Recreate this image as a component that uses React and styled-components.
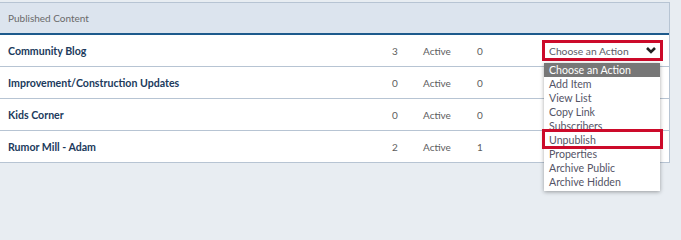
import React from 'react';
import styled, { createGlobalStyle } from 'styled-components';

const GlobalStyle = createGlobalStyle`
  html, body {
    margin: 0;
    padding: 0;
    background: #e8edf2;
    font-family: Lato, "Open Sans", sans-serif;
  }
`;

const Page = styled.div`
  box-sizing: border-box;
  min-height: 204px;
  padding-top: 2px;
  padding-right: 11px;
`;

const Panel = styled.div`
  background: #fff;
  border-top: 1px solid #b7c4d3;
  border-right: 1px solid #b7c4d3;
`;

const Header = styled.div`
  height: 30px;
  display: flex;
  align-items: center;
  padding: 0 8px;
  background: #dce4ee;
  border-bottom: 2px solid #1d5a8c;
  color: #6a6a6a;
  font-size: 10px;
`;

const Row = styled.div`
  position: relative;
  display: grid;
  grid-template-columns: 384px 31px 54px 65px 121px;
  align-items: center;
  height: 31px;
  padding-left: 8px;
  border-bottom: 1px solid #b7c4d3;
  font-size: 10px;
  color: #5d5d5d;
`;

const Title = styled.div`
  color: #203a5c;
  font-size: 10.6px;
  font-weight: 700;
`;

const Cell = styled.div``;

const ActionCell = styled.div`
  position: relative;
`;

const Select = styled.div`
  display: flex;
  align-items: center;
  justify-content: space-between;
  height: 15px;
  padding: 0 4px;
  border: 3px solid #cc0a2a;
  color: #5b5b66;
  font-size: 10.3px;
`;

const Menu = styled.ul`
  position: absolute;
  top: calc(100% + 2px);
  left: 2px;
  width: 116px;
  margin: 0;
  padding: 0 0 2px;
  list-style: none;
  background: #fff;
  box-shadow: 0 1px 4px rgba(0, 0, 0, 0.35);
  z-index: 5;
`;

const Item = styled.li`
  position: relative;
  height: 14px;
  line-height: 14px;
  padding-left: 5px;
  font-size: 10.6px;
  color: ${p => (p.$selected ? '#fff' : '#545466')};
  background: ${p => (p.$selected ? '#777' : 'transparent')};

  ${p =>
    p.$marked &&
    `
    &::after {
      content: '';
      position: absolute;
      top: -4px;
      left: -2px;
      right: -3px;
      bottom: -2px;
      border: 3px solid #cc0a2a;
    }
  `}
`;

const Chevron = () => (
  <svg width="10" height="7" viewBox="0 0 10 7">
    <polyline points="1,1 5,5 9,1" fill="none" stroke="#222" strokeWidth="2.6" />
  </svg>
);

const rows = [
  { title: 'Community Blog', count: 3, status: 'Active', subs: 0 },
  { title: 'Improvement/Construction Updates', count: 0, status: 'Active', subs: 0 },
  { title: 'Kids Corner', count: 0, status: 'Active', subs: 0 },
  { title: 'Rumor Mill - Adam', count: 2, status: 'Active', subs: 1 },
];

const actions = [
  'Choose an Action',
  'Add Item',
  'View List',
  'Copy Link',
  'Subscribers',
  'Unpublish',
  'Properties',
  'Archive Public',
  'Archive Hidden',
];

const App = () => (
  <>
    <GlobalStyle />
    <Page>
      <Panel>
        <Header>Published Content</Header>
        {rows.map((r, i) => (
          <Row key={r.title}>
            <Title>{r.title}</Title>
            <Cell>{r.count}</Cell>
            <Cell>{r.status}</Cell>
            <Cell>{r.subs}</Cell>
            {i === 0 ? (
              <ActionCell>
                <Select>
                  <span>Choose an Action</span>
                  <Chevron />
                </Select>
                <Menu>
                  {actions.map((a, j) => (
                    <Item key={a} $selected={j === 0} $marked={a === 'Unpublish'}>
                      {a}
                    </Item>
                  ))}
                </Menu>
              </ActionCell>
            ) : (
              <Cell />
            )}
          </Row>
        ))}
      </Panel>
    </Page>
  </>
);

export default App;
